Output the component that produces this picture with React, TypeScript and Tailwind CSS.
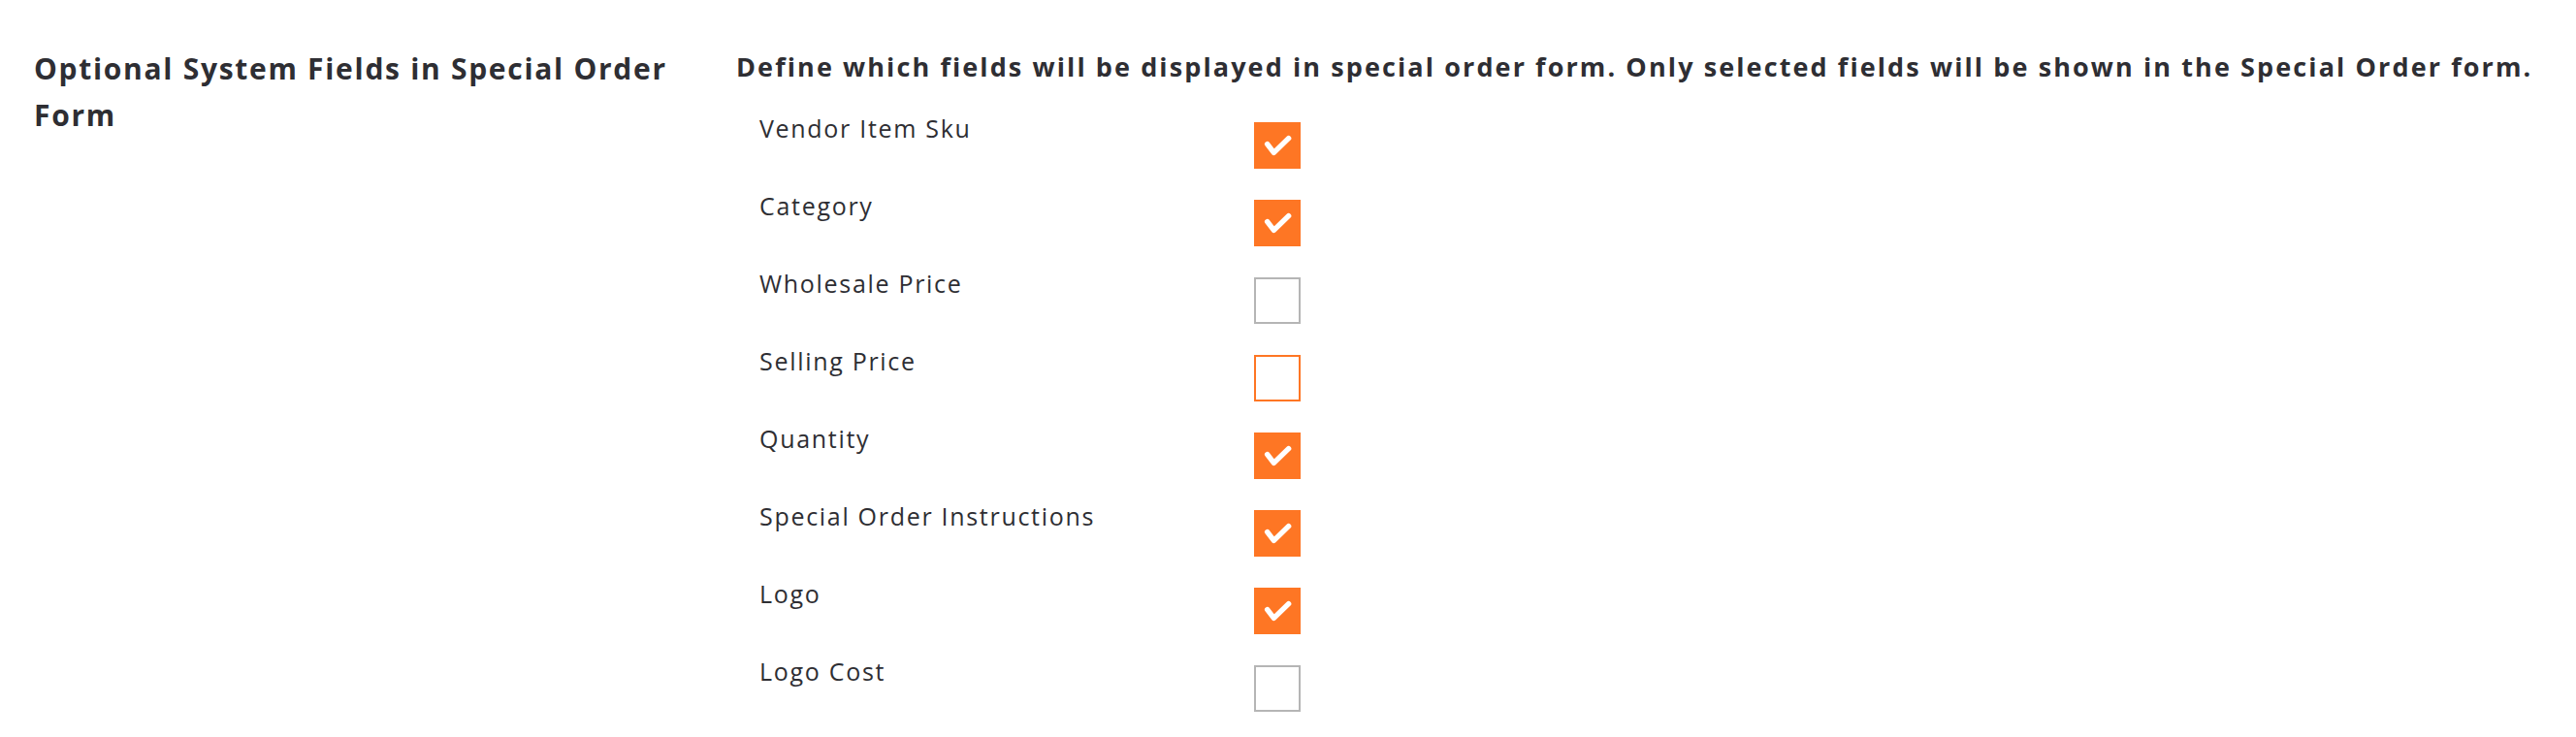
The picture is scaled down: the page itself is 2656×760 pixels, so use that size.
import React from "react";

const fields: { label: string; state: "on" | "off" | "focus" }[] = [
  { label: "Vendor Item Sku", state: "on" },
  { label: "Category", state: "on" },
  { label: "Wholesale Price", state: "off" },
  { label: "Selling Price", state: "focus" },
  { label: "Quantity", state: "on" },
  { label: "Special Order Instructions", state: "on" },
  { label: "Logo", state: "on" },
  { label: "Logo Cost", state: "off" },
];

function Box({ state }: { state: "on" | "off" | "focus" }) {
  if (state === "on") {
    return (
      <div className="mt-[12px] w-[48px] h-[48px] bg-[#fe7624] flex items-center justify-center shrink-0">
        <svg width="48" height="48" viewBox="0 0 48 48">
          <path d="M13.7 22.6 L20.4 31.4 L35.6 16.6" fill="none" stroke="#fff" strokeWidth="5.5" strokeLinecap="round" strokeLinejoin="round" />
        </svg>
      </div>
    );
  }
  return (
    <div
      className={
        "mt-[12px] w-[48px] h-[48px] bg-white border-2 shrink-0 " +
        (state === "focus" ? "border-[#fe7624]" : "border-[#b5b5b5]")
      }
    />
  );
}

export default function App() {
  return (
    <div className="w-[2656px] h-[760px] bg-white text-[#2e2e33] flex" style={{ fontFamily: "'Open Sans', Lato, sans-serif" }}>
      <div className="w-[759px] pl-[35px] pt-[47px] shrink-0">
        <h2 className="w-[700px] text-[30px] leading-[48px] font-bold tracking-[1.7px]">
          Optional System Fields in Special Order Form
        </h2>
      </div>
      <div className="flex-1 pt-[51px]">
        <p className="text-[27px] leading-[36px] font-bold tracking-[2.1px] whitespace-nowrap">
          Define which fields will be displayed in special order form. Only selected fields will be shown in the Special Order form.
        </p>
        <div className="mt-[27px] pl-[24px] flex flex-col">
          {fields.map((f) => (
            <div key={f.label} className="h-[80px] flex items-start">
              <span className="w-[510px] text-[25px] leading-[36px] tracking-[1.7px]">{f.label}</span>
              <Box state={f.state} />
            </div>
          ))}
        </div>
      </div>
    </div>
  );
}
